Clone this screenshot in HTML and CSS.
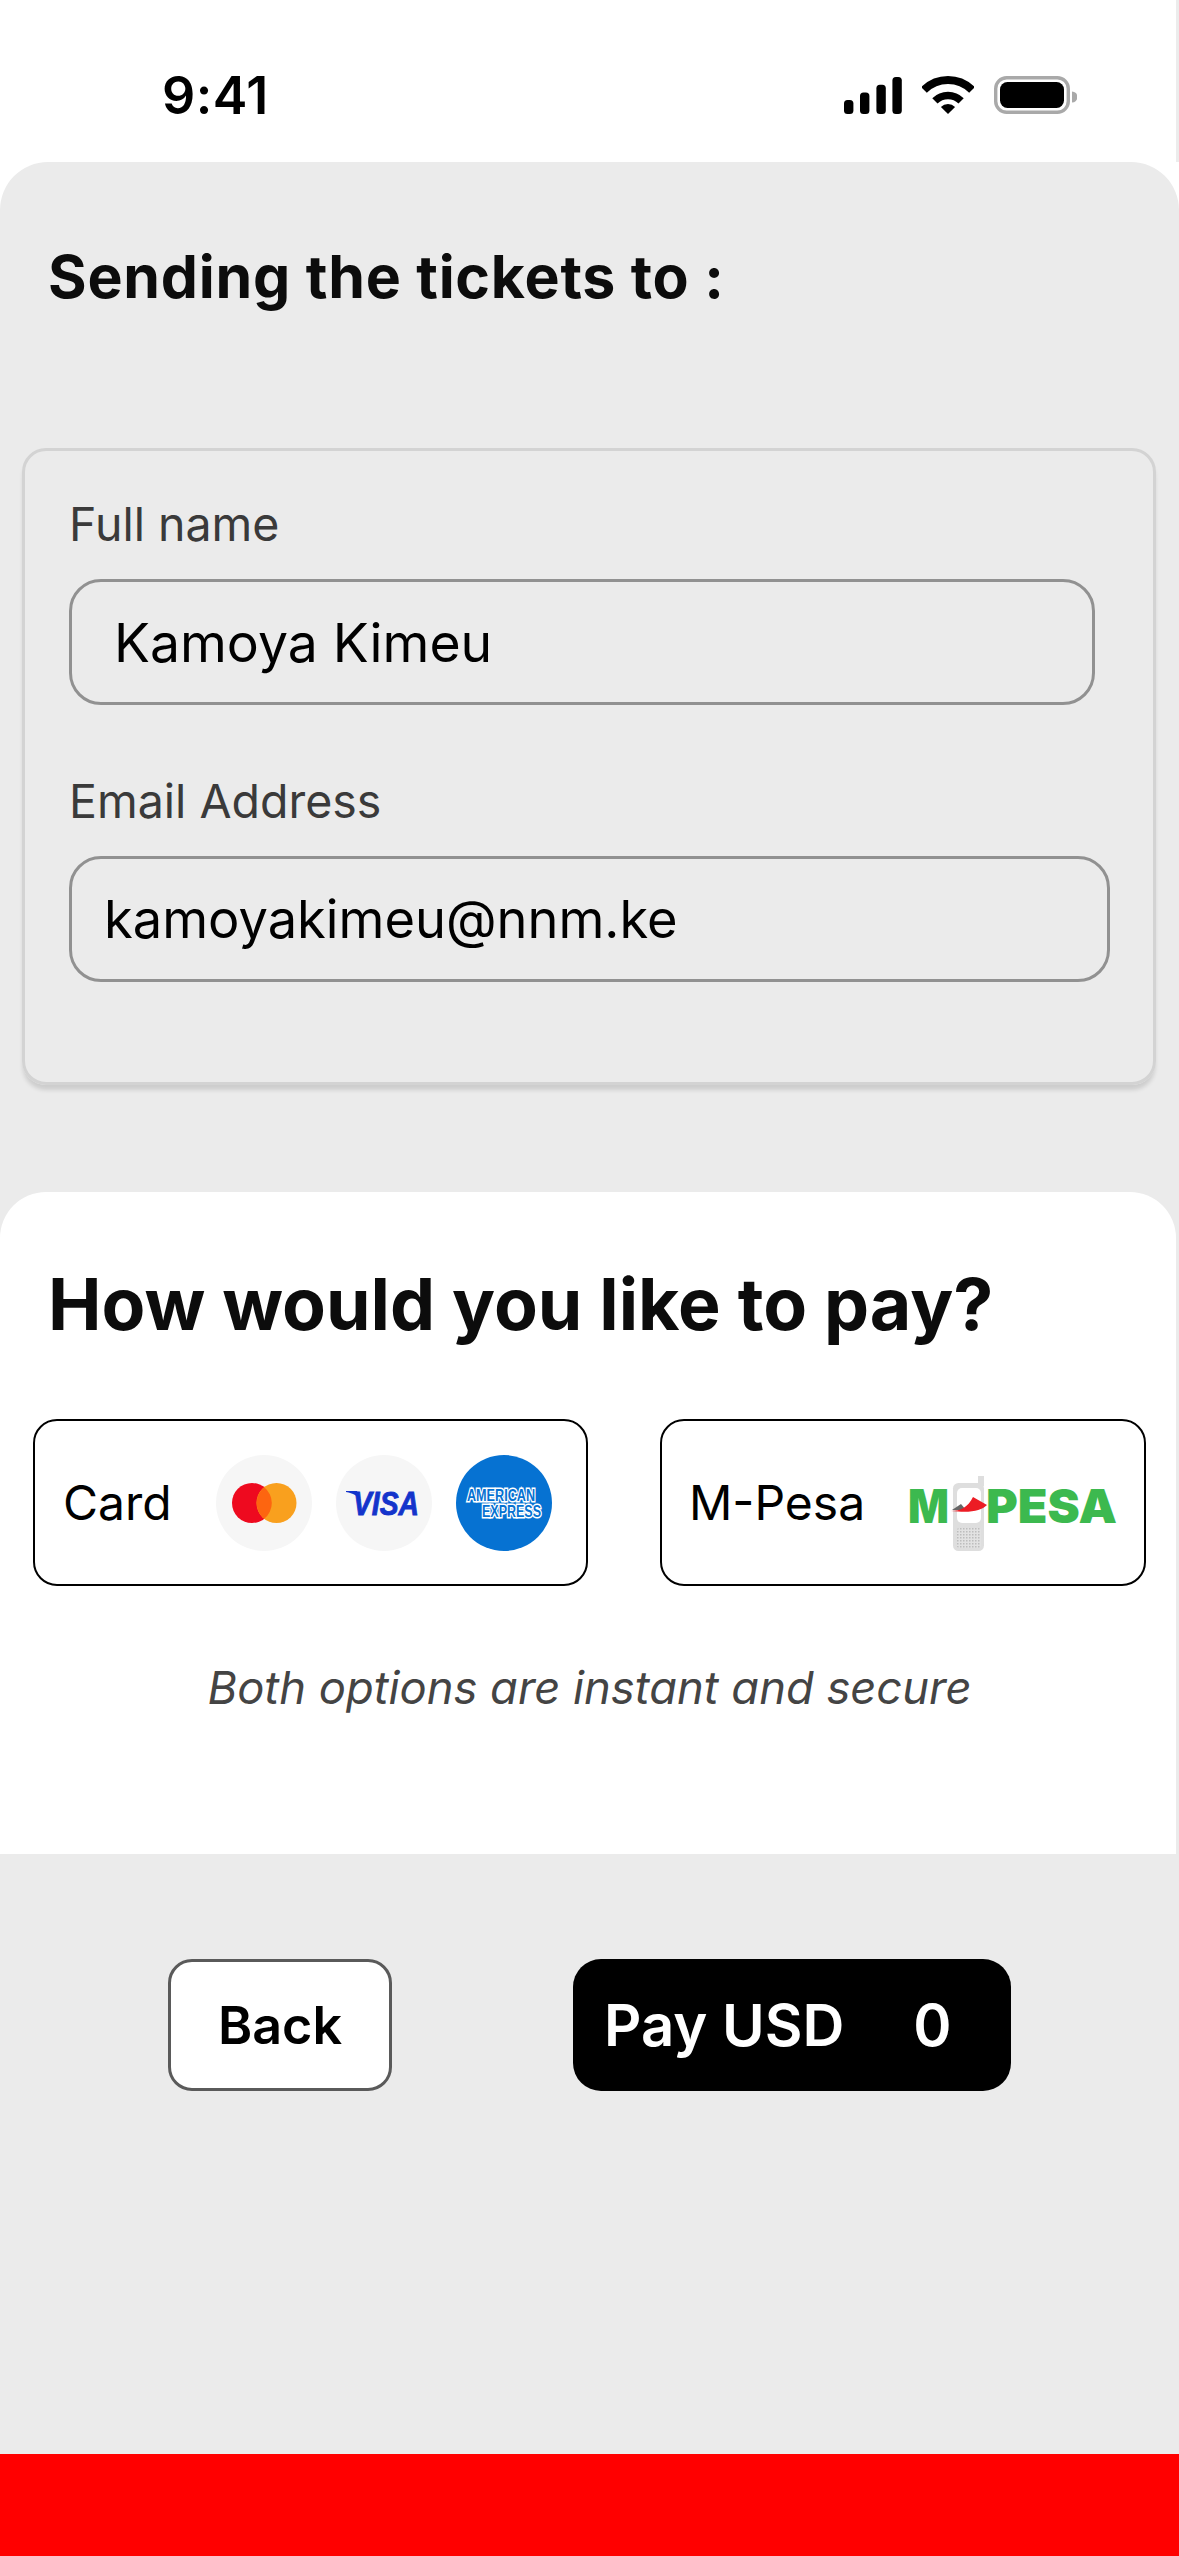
FILE: index.html
```html
<!DOCTYPE html>
<html lang="en">
<head>
<meta charset="utf-8">
<title>Checkout</title>
<link rel="stylesheet" href="styles.css">
</head>
<body>
<div class="screen">
  <header class="status">
    <span class="time">9:41</span>
    <div class="status-icons">
      <svg class="sig" width="58" height="37" viewBox="0 0 58 37"><rect x="0" y="23" width="9.4" height="14" rx="3.5"/><rect x="16" y="15.4" width="9.4" height="21.6" rx="3.5"/><rect x="32.4" y="7.7" width="9.4" height="29.3" rx="3.5"/><rect x="48.4" y="0" width="9.4" height="37" rx="3.5"/></svg>
      <svg class="wifi" width="52" height="38" viewBox="0 0 52 38"><path d="M2 14A34 34 0 0 1 50 14" fill="none" stroke="#000" stroke-width="8"/><path d="M12.9 24.9A18.5 18.5 0 0 1 39.1 24.9" fill="none" stroke="#000" stroke-width="7.4"/><path d="M26 38L18.9 30.9A10 10 0 0 1 33.1 30.9Z"/></svg>
      <svg class="batt" width="83" height="38" viewBox="0 0 83 38"><rect x="1.7" y="1.7" width="72.6" height="34.6" rx="11" fill="none" stroke="#a9a9a9" stroke-width="3.4"/><rect x="6" y="6" width="64" height="26" rx="7.5"/><path d="M78 15.5a5.5 5.5 0 0 1 0 11z" fill="#a9a9a9"/></svg>
    </div>
  </header>

  <main class="panel">
    <section class="recipient">
      <h2 class="send-title">Sending the tickets to :</h2>
      <form class="fields">
        <label class="label">Full name</label>
        <div class="input input-name">Kamoya Kimeu</div>
        <label class="label label-email">Email Address</label>
        <div class="input input-email">kamoyakimeu@nnm.ke</div>
      </form>
    </section>

    <section class="pay">
      <h1 class="pay-title">How would you like to pay?</h1>
      <div class="options">
        <div class="option option-card">
          <span class="option-name">Card</span>
          <div class="brands">
            <span class="brand">
              <svg width="64" height="40" viewBox="0 0 64 40"><circle cx="20" cy="20" r="20" fill="#ee0a1f"/><circle cx="44.5" cy="20" r="20" fill="#f9a01e"/><path d="M32.2 4.3a20 20 0 0 1 0 31.4a20 20 0 0 1 0-31.4z" fill="#fd6510"/></svg>
            </span>
            <span class="brand">
              <svg class="visa" width="76" height="26" viewBox="0 0 76 26"><text x="40" y="25" text-anchor="middle" textLength="66" lengthAdjust="spacingAndGlyphs">VISA</text><path d="M0 1H11L15 11C12 6 7 3 0 2Z" fill="#1434cb"/></svg>
            </span>
            <span class="brand brand-amex">
              <svg class="amex" width="80" height="32" viewBox="0 0 80 32"><text x="3" y="14" textLength="68" lengthAdjust="spacingAndGlyphs">AMERICAN</text><text x="18" y="30" textLength="59" lengthAdjust="spacingAndGlyphs">EXPRESS</text></svg>
            </span>
          </div>
        </div>
        <div class="option option-mpesa">
          <span class="option-name">M-Pesa</span>
          <svg class="mpesa" width="208" height="78" viewBox="0 0 208 78">
            <defs>
              <pattern id="keypad" width="3" height="3" patternUnits="userSpaceOnUse"><rect width="3" height="3" fill="#e2e2e2"/><rect width="1.500" height="1.500" fill="#bdbdbd"/></pattern>
            </defs>
            <text class="mp" x="-1" y="49" textLength="41" lengthAdjust="spacingAndGlyphs">M</text>
            <rect x="44" y="9" width="31" height="68" rx="5.500" fill="#dedede"/>
            <rect x="69" y="2" width="6" height="10" fill="#dedede"/>
            <rect x="48" y="14" width="24" height="35" rx="5" fill="#fff"/>
            <rect x="48" y="54" width="24" height="20" rx="2" fill="url(#keypad)"/>
            <path d="M43 36L52 30L57 36Z" fill="#666"/>
            <path d="M42 37C52 37 59 33 64 23L78 31C72 37 62 39 42 37Z" fill="#ec1c24"/>
            <text class="mp" x="77" y="49" textLength="131" lengthAdjust="spacingAndGlyphs">PESA</text>
          </svg>
        </div>
      </div>
      <p class="note">Both options are instant and secure</p>
    </section>

    <section class="actions">
      <button class="btn btn-back" type="button">Back</button>
      <button class="btn btn-pay" type="button"><span>Pay USD</span><span>0</span></button>
    </section>
  </main>
  <footer class="redbar"></footer>
</div>
</body>
</html>
```
FILE: styles.css
```css
* { box-sizing: border-box; }
html, body { margin: 0; padding: 0; background: #fff; }
body { font-family: "Inter", "Noto Sans", sans-serif; color: #0c0c0c; }
.screen { width: 1179px; height: 2556px; display: flex; flex-direction: column; overflow: hidden; }

.status { height: 162px; flex: none; display: flex; justify-content: space-between; align-items: flex-start; padding: 66px 99px 0 162px; background: #fff; border-right: 3px solid #ececec; }
.time { font-size: 52px; line-height: 60px; font-weight: 600; color: #000; letter-spacing: .5px; }
.status-icons { display: flex; align-items: flex-start; gap: 20px; padding-top: 10px; }
.status-icons svg { display: block; fill: #000; }
.sig { margin-top: 1px; }

.panel { flex: 1; width: 1179px; background: #ebebeb; border-radius: 48px 48px 0 0; display: flex; flex-direction: column; }
.recipient { height: 1030px; flex: none; padding: 85px 23px 0 22px; }
.send-title { margin: 0; font-size: 59px; line-height: 60px; font-weight: 700; letter-spacing: .75px; padding-left: 26px; }
.fields { margin-top: 141px; height: 637px; border: 3px solid #d3d3d3; border-radius: 24px; padding: 45px 44px 0; box-shadow: 0 6px 4px -1px rgba(0,0,0,.13); display: flex; flex-direction: column; align-items: flex-start; }
.label { font-size: 46.5px; line-height: 56px; color: #3a3a3a; }
.label-email { margin-top: 68px; }
.input { height: 126px; margin-top: 27px; border: 3px solid #919191; border-radius: 32px; display: flex; align-items: center; color: #000; }
.input-name { width: 1026px; padding-left: 42px; font-size: 53.5px; }
.input-email { width: 1041px; padding-left: 32px; font-size: 52.4px; }

.pay { height: 662px; width: 1176px; flex: none; background: #fff; border-radius: 46px 46px 0 0; padding: 68px 0 0; }
.pay-title { margin: 0 0 0 48px; font-size: 71.6px; line-height: 88px; font-weight: 700; }
.options { margin-top: 71px; padding-left: 33px; display: flex; gap: 72px; }
.option { height: 167px; border: 2px solid #000; border-radius: 24px; display: flex; align-items: center; justify-content: space-between; }
.option-card { width: 555px; padding: 0 34px 0 28px; }
.option-mpesa { width: 486px; padding: 0 27px 0 27px; }
.option-name { font-size: 48px; color: #000; }
.brands { display: flex; gap: 24px; }
.brand { width: 96px; height: 96px; border-radius: 50%; background: #f6f6f6; display: flex; align-items: center; justify-content: center; }
.brand-amex { background: #0672d2; }
.brand svg { display: block; overflow: visible; }
.visa text { font-family: "Liberation Sans", sans-serif; font-size: 33px; font-weight: 700; font-style: italic; fill: #1434cb; stroke: #1434cb; stroke-width: .9px; }
.amex text { font-family: "Liberation Sans", sans-serif; font-size: 16.5px; font-weight: 700; fill: #0672d2; stroke: #fff; stroke-width: 3px; paint-order: stroke; }
.mpesa { display: block; flex: none; margin-top: 20px; overflow: visible; }
.mp { font-family: "Inter", sans-serif; font-size: 47px; font-weight: 900; fill: #3cb94f; }
.note { margin: 74px 0 0; padding-left: 3px; text-align: center; font-size: 45.3px; line-height: 56px; font-style: italic; color: #444; }

.actions { flex: 1; background: #ebebeb; display: flex; align-items: flex-start; gap: 181px; padding: 105px 0 0 168px; }
.btn { height: 132px; font-family: inherit; font-size: 52px; font-weight: 600; border-radius: 24px; padding: 0; }
.btn-back { width: 224px; background: #fff; color: #000; border: 3px solid #5a5a5a; }
.btn-pay { width: 438px; background: #000; color: #fff; border: 0; display: flex; align-items: center; gap: 69px; padding-left: 31px; font-size: 58px; border-radius: 28px; }

.redbar { height: 102px; flex: none; background: #ff0000; }
```
